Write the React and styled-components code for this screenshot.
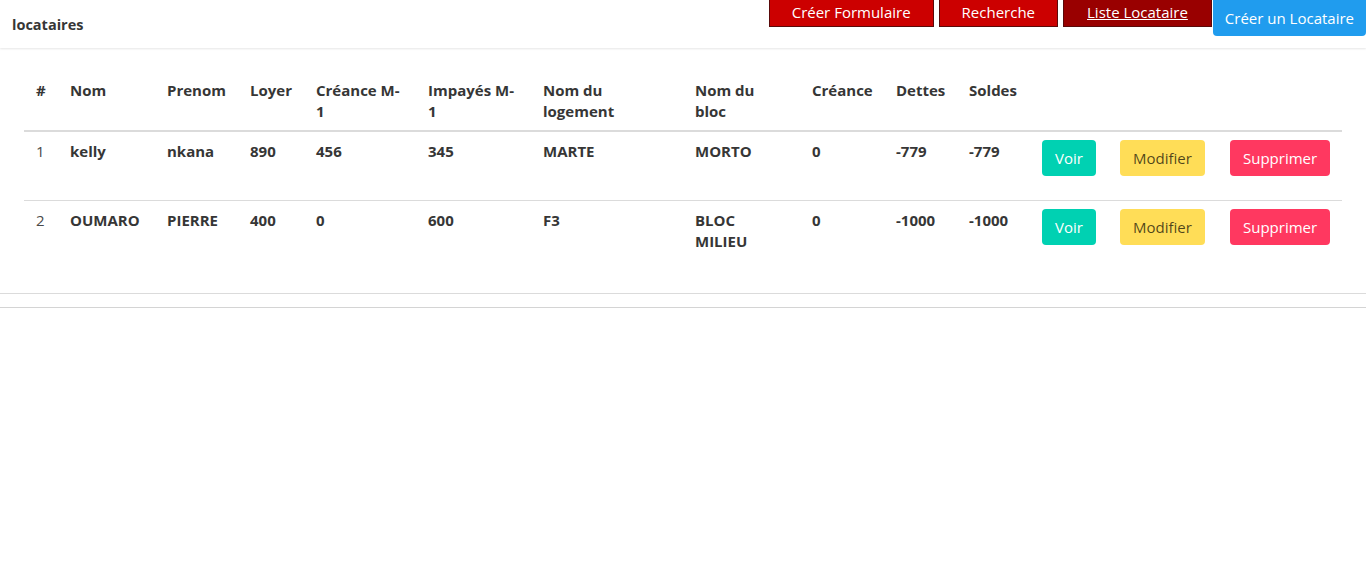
import styled, { createGlobalStyle } from "styled-components";

const GlobalStyle = createGlobalStyle`
  body {
    margin: 0;
    background: #fff;
    font-family: "Open Sans", "Noto Sans", sans-serif;
    color: #4a4a4a;
  }
`;

const locataires = [
  {
    id: 1,
    nom: "kelly",
    prenom: "nkana",
    loyer: 890,
    creanceM1: 456,
    impayesM1: 345,
    logement: "MARTE",
    bloc: "MORTO",
    creance: 0,
    dettes: -779,
    soldes: -779,
  },
  {
    id: 2,
    nom: "OUMARO",
    prenom: "PIERRE",
    loyer: 400,
    creanceM1: 0,
    impayesM1: 600,
    logement: "F3",
    bloc: "BLOC MILIEU",
    creance: 0,
    dettes: -1000,
    soldes: -1000,
  },
];

const columns = [
  { label: "#", width: 34 },
  { label: "Nom", width: 97 },
  { label: "Prenom", width: 83 },
  { label: "Loyer", width: 66 },
  { label: "Créance M-1", width: 112 },
  { label: "Impayés M-1", width: 115 },
  { label: "Nom du logement", width: 152 },
  { label: "Nom du bloc", width: 117 },
  { label: "Créance", width: 84 },
  { label: "Dettes", width: 73 },
  { label: "Soldes", width: 73 },
  { label: "", width: 78 },
  { label: "", width: 110 },
  { label: "", width: 124 },
];

const App = () => {
  return (
    <>
      <GlobalStyle />
      <Card>
        <CardHeader>
          <Title>locataires</Title>
          <Nav>
            <NavButton>Créer Formulaire</NavButton>
            <NavButton>Recherche</NavButton>
            <NavButton active>Liste Locataire</NavButton>
            <CreateButton>Créer un Locataire</CreateButton>
          </Nav>
        </CardHeader>
        <CardContent>
          <Table>
            <colgroup>
              {columns.map((col, key) => (
                <col key={key} style={{ width: col.width }} />
              ))}
            </colgroup>
            <thead>
              <tr>
                {columns.map((col, key) => (
                  <Th key={key}>{col.label}</Th>
                ))}
              </tr>
            </thead>
            <tbody>
              {locataires.map((loc, key) => (
                <Row key={loc.id} last={key === locataires.length - 1}>
                  <Td normal>{loc.id}</Td>
                  <Td>{loc.nom}</Td>
                  <Td>{loc.prenom}</Td>
                  <Td>{loc.loyer}</Td>
                  <Td>{loc.creanceM1}</Td>
                  <Td>{loc.impayesM1}</Td>
                  <Td>{loc.logement}</Td>
                  <Td>{loc.bloc}</Td>
                  <Td>{loc.creance}</Td>
                  <Td>{loc.dettes}</Td>
                  <Td>{loc.soldes}</Td>
                  <Td>
                    <ActionButton variant="voir">Voir</ActionButton>
                  </Td>
                  <Td>
                    <ActionButton variant="modifier">Modifier</ActionButton>
                  </Td>
                  <Td>
                    <ActionButton variant="supprimer">Supprimer</ActionButton>
                  </Td>
                </Row>
              ))}
            </tbody>
          </Table>
        </CardContent>
        <CardFooter />
      </Card>
    </>
  );
};

export default App;

const Card = styled.div`
  background: #fff;
  box-shadow: 0 2px 4px rgba(10, 10, 10, 0.08);
`;

const CardHeader = styled.header`
  display: flex;
  justify-content: space-between;
  align-items: flex-start;
  height: 48px;
  box-shadow: 0 1px 2px rgba(10, 10, 10, 0.1);
`;

const Title = styled.p`
  margin: 0;
  padding: 14px 12px;
  font-size: 14.5px;
  line-height: 21px;
  font-weight: 700;
  color: #363636;
`;

const Nav = styled.nav`
  display: flex;
  align-items: flex-start;
  gap: 5px;
`;

const NavButton = styled.a`
  display: block;
  height: 27px;
  box-sizing: border-box;
  padding: 0 ${(p) => (p.active ? "23px" : "22px")};
  background: ${(p) => (p.active ? "#990000" : "#cc0000")};
  border: 1px solid #5a0a0a;
  border-top: none;
  color: #fff;
  font-size: 15px;
  line-height: 25px;
  text-decoration: ${(p) => (p.active ? "underline" : "none")};
  cursor: pointer;
`;

const CreateButton = styled.button`
  height: 36px;
  margin-left: -4px;
  padding: 0 12px;
  border: none;
  border-radius: 0 0 4px 4px;
  background: #209cee;
  color: #fff;
  font-family: inherit;
  font-size: 15px;
  cursor: pointer;
`;

const CardContent = styled.div`
  padding: 24px;
`;

const Table = styled.table`
  width: 100%;
  table-layout: fixed;
  border-collapse: collapse;
  font-size: 15px;
  line-height: 21px;
  color: #363636;
`;

const Th = styled.th`
  padding: 8px 12px;
  text-align: left;
  vertical-align: top;
  font-weight: 700;
  border-bottom: 2px solid #dbdbdb;
`;

const Row = styled.tr`
  border-bottom: ${(p) => (p.last ? "none" : "1px solid #dbdbdb")};
`;

const Td = styled.td`
  padding: 9px 12px 8px;
  vertical-align: top;
  font-weight: ${(p) => (p.normal ? 400 : 700)};
  color: ${(p) => (p.normal ? "#4a4a4a" : "#363636")};
  height: 51px;
`;

const buttonColors = {
  voir: { bg: "#00d1b2", color: "#fff" },
  modifier: { bg: "#ffdd57", color: "rgba(0, 0, 0, 0.7)" },
  supprimer: { bg: "#ff3860", color: "#fff" },
};

const ActionButton = styled.button`
  height: 36px;
  padding: 0 13px;
  margin-top: -1px;
  border: none;
  border-radius: 4px;
  background: ${(p) => buttonColors[p.variant].bg};
  color: ${(p) => buttonColors[p.variant].color};
  font-family: inherit;
  font-size: 15px;
  cursor: pointer;
`;

const CardFooter = styled.footer`
  height: 13px;
  border-top: 1px solid #dbdbdb;
  border-bottom: 1px solid #d4d4d4;
`;
